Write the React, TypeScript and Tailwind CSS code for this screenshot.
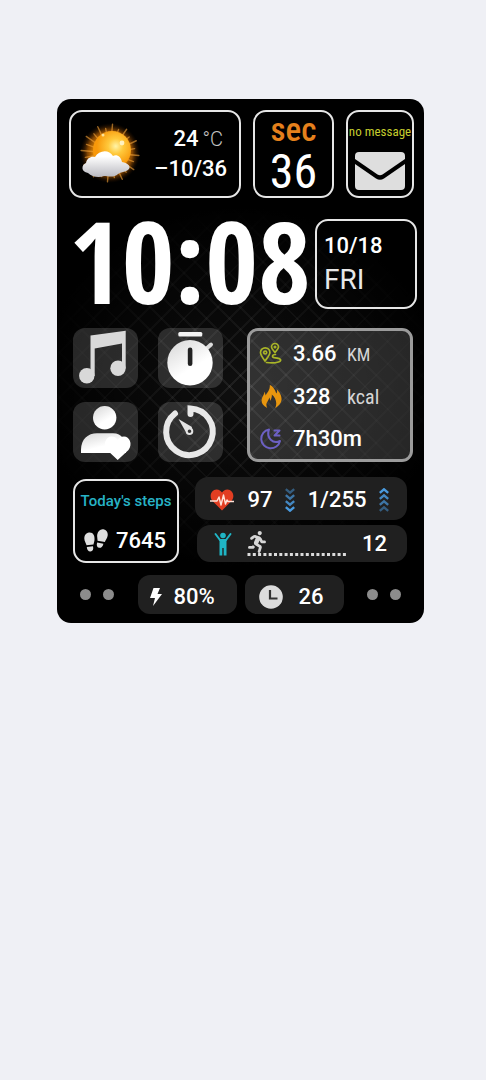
import type { ReactNode } from "react";
import { FaRunning } from "react-icons/fa";
import { ImFire } from "react-icons/im";

const value = "text-[22px] leading-6 font-medium whitespace-nowrap";
const frame = "rounded-[13px] border-2 border-[#e6e6e6]";
const condensed = "font-['Roboto_Condensed','Liberation_Sans',sans-serif]";

function SunCloud() {
  return (
    <svg viewBox="0 0 64 64" className="size-16 shrink-0" aria-hidden="true">
      <defs>
        <radialGradient id="glow">
          <stop offset="0.5" stopColor="#f89808" />
          <stop offset="0.75" stopColor="#c86a04" stopOpacity="0.65" />
          <stop offset="1" stopColor="#3a1800" stopOpacity="0" />
        </radialGradient>
        <radialGradient id="sun" cx="0.6" cy="0.4">
          <stop offset="0" stopColor="#fff4a8" />
          <stop offset="0.4" stopColor="#ffc93c" />
          <stop offset="1" stopColor="#f8980a" />
        </radialGradient>
        <linearGradient id="cloud" x1="0" y1="0" x2="0" y2="1">
          <stop offset="0.2" stopColor="#ffffff" />
          <stop offset="1" stopColor="#b9b9c0" />
        </linearGradient>
      </defs>
      <circle cx="31" cy="31" r="30" fill="url(#glow)" />
      <g stroke="#f7a63a" strokeOpacity="0.6" strokeWidth="1.400" strokeLinecap="round">
        {Array.from({ length: 24 }, (_, i) => (
          <line
            key={i}
            x1="31"
            y1="14"
            x2="31"
            y2={i % 2 ? 6 : 2}
            transform={`rotate(${i * 15 + 5} 31 31)`}
          />
        ))}
      </g>
      <circle cx="33" cy="28" r="19" fill="url(#sun)" />
      <circle cx="43" cy="21" r="2.400" fill="#fffbe0" fillOpacity="0.8" />
      <circle cx="24" cy="13" r="1.500" fill="#fff2b8" fillOpacity="0.8" />
      <path
        d="M9 51c-7-1-7-8-2-10 1-5 5-7 9-6 4-7 14-8 18-1 4-2 8 1 9 6 6 1 10 5 6 8-3 2-7 2-10 4-4 4-10 2-14 2-5 2-12 1-16-3z"
        fill="url(#cloud)"
      />
    </svg>
  );
}

function Envelope() {
  return (
    <svg viewBox="0 0 50 38" className="w-[50px] max-w-full" fill="#dedede" aria-hidden="true">
      <path d="M4 0h42q4 0 4 4v3L27.500 22.500q-2.500 1.600-5 0L0 7V4q0-4 4-4z" />
      <path d="M0 12l21 14.500q4 2.500 8 0L50 12v22q0 4-4 4H4q-4 0-4-4z" />
    </svg>
  );
}

function Shade({ id }: { id: string }) {
  return (
    <defs>
      <linearGradient id={id} x1="0" y1="0" x2="0.600" y2="1">
        <stop offset="0" stopColor="#d6d6d6" />
        <stop offset="0.700" stopColor="#ffffff" />
      </linearGradient>
    </defs>
  );
}

const apps: { name: string; art: ReactNode }[] = [
  {
    name: "Music",
    art: (
      <g fill="#d9d9d9">
        <path d="M17.500 7.500L52.700 2.700V40H49V15.500L21.700 20.500V48H17.500z" />
        <circle cx="13.800" cy="47.800" r="7.700" />
        <circle cx="45" cy="40.300" r="7.700" />
      </g>
    ),
  },
  {
    name: "Stopwatch",
    art: (
      <>
        <Shade id="watch" />
        <rect x="20.300" y="4" width="24" height="4.500" rx="1.500" fill="#f4f4f4" />
        <path d="M48 21l5-4.500" stroke="#ddd" strokeWidth="4" strokeLinecap="round" />
        <circle cx="32" cy="34.700" r="22.700" fill="url(#watch)" />
        <rect x="29.800" y="19.500" width="4.600" height="18.500" rx="2.300" fill="#222" />
      </>
    ),
  },
  {
    name: "Contacts",
    art: (
      <>
        <Shade id="person" />
        <circle cx="31.700" cy="15.700" r="11.700" fill="url(#person)" />
        <path d="M8 51V48C8 37 15 31.300 24 31.300H40C49 31.300 53 38 53 51z" fill="url(#person)" />
        <path
          d="M44.700 58L34 48C29.500 42 33 34.500 38.500 34.500 41.500 34.500 43.500 36 44.700 38 46 36 48 34.500 51 34.500 56.500 34.500 60 42 55.500 48z"
          fill="#fff"
        />
      </>
    ),
  },
  {
    name: "Timer",
    art: (
      <g fill="none" strokeLinecap="round">
        <path d="M32.500 12V6.500A23.300 23.300 0 1 1 17 11.500" stroke="#e8e8e8" strokeWidth="6" />
        <path d="M20.500 17l7 12.500a5 5 0 0 0 6.500-4.500z" fill="#e4e4e4" />
        <circle cx="31.500" cy="29.300" r="2.800" fill="#333" stroke="#e4e4e4" strokeWidth="2" />
      </g>
    ),
  },
];

function Route() {
  return (
    <svg viewBox="0 0 24 24" className="size-6" fill="none" stroke="#a9b527" strokeWidth="1.700" aria-hidden="true">
      <path d="M6 19C3.500 15.500 1.500 13 1.500 10.500a4.700 4.700 0 0 1 9.400 0C10.900 13 8.500 15.500 6 19z" />
      <circle cx="6.200" cy="10.500" r="1.500" />
      <path d="M16 10.500C14 8 12.500 6.500 12.500 5a3.500 3.500 0 0 1 7 0C19.500 6.500 18 8 16 10.500z" />
      <circle cx="16" cy="5" r="0.700" />
      <path d="M16.500 12.500c-4 .5-4 3 0 3.300 6 .7 6.500 3 3 4.200-3 1-9 .9-12 .5" strokeLinecap="round" />
    </svg>
  );
}

function SleepMoon() {
  return (
    <svg viewBox="0 0 24 24" className="size-6" fill="none" stroke="#6c60c4" strokeWidth="2" strokeLinejoin="round" strokeLinecap="round" aria-hidden="true">
      <path d="M10 2.500A9.500 9.500 0 1 0 21 14C14 17.500 7 11 10 2.500z" />
      <path d="M15.500 3.500H20.500L15.500 8.500H20.500" />
    </svg>
  );
}

function HeartPulse() {
  return (
    <svg viewBox="0 0 26 24" className="w-[26px] shrink-0" fill="none" aria-hidden="true">
      <path d="M13 22.500L3.500 13C-.5 8 2.500 1.500 7.500 1.500c2.700 0 4.500 1.500 5.500 3 1-1.500 2.800-3 5.500-3 5 0 8 6.500 4 11.500z" fill="#e23e22" />
      <path d="M1 13H8l2-4 2 8 2.500-10 2 9 1.500-4 1 1.500H25" stroke="#ffe3d8" strokeWidth="1.400" strokeLinejoin="round" />
    </svg>
  );
}

function Chevrons({ up = false }: { up?: boolean }) {
  return (
    <svg viewBox="0 0 10 24" className={up ? "w-[10px] shrink-0 rotate-180" : "w-[10px] shrink-0"} fill="none" stroke="#4a9ade" strokeWidth="2.400" aria-hidden="true">
      {[0.5, 0.7, 0.85, 1].map((opacity, i) => (
        <path key={opacity} d={`M0.800 ${1.2 + i * 6}l4.200 3.500 4.200-3.500`} opacity={opacity} />
      ))}
    </svg>
  );
}

function Standing() {
  return (
    <svg viewBox="0 0 18 24" className="w-[18px] shrink-0" fill="#1fb5c5" aria-hidden="true">
      <circle cx="9" cy="3.500" r="2.800" />
      <path d="M1.500 2L6 8H12L16.500 2" fill="none" stroke="#1fb5c5" strokeWidth="2" strokeLinecap="round" />
      <path d="M5.500 7h7v16.500H9.700V16H8.300v7.500H5.500z" />
    </svg>
  );
}

function Footprints() {
  return (
    <svg viewBox="0 0 24 24" className="size-6 shrink-0" fill="#dedede" aria-hidden="true">
      <path d="M5 3.500c4-.5 6 3 5.500 7.500-.2 2-.8 3-1 4.500L2.500 16.300C2.300 14.500.3 12.500.3 9.500.3 6.500 2 3.800 5 3.500z" />
      <path d="M2.800 18l6.200-.7c.8 3-.3 5-2.500 5.200-2 .2-3.500-1.500-3.700-4.500z" />
      <path d="M19.500.3c3.500.7 4.700 3.700 4.100 6.700-.6 2.800-2 4-2.700 6L13.500 11.800c.3-1.800-.8-3.500-.2-6.500.7-3.200 3.200-5.700 6.200-5z" />
      <path d="M13.200 13.500l6.200 1.200c-.5 3-2.400 4.500-4.400 4.100-2-.4-2.800-2.700-1.800-5.300z" />
    </svg>
  );
}

const stats = [
  { icon: <Route />, amount: "3.66", unit: "KM", size: "text-lg" },
  { icon: <ImFire className="size-[23px] text-[#e8960f]" />, amount: "328", unit: "kcal", size: "text-xl" },
  { icon: <SleepMoon />, amount: "7h30m", unit: "", size: "text-lg" },
];

function Dots() {
  return (
    <span className="flex gap-3 px-1" aria-hidden="true">
      <i className="size-[11px] rounded-full bg-[#8c8c8c]" />
      <i className="size-[11px] rounded-full bg-[#8c8c8c]" />
    </span>
  );
}

export default function App() {
  return (
    <main className="min-h-screen bg-[#eff0f5] pt-[99px] pr-[62px] pb-8 pl-[57px] font-['Roboto','Liberation_Sans',sans-serif] text-white">
      <section className="rounded-[14px] bg-black bg-[radial-gradient(ellipse_200px_180px_at_50%_55%,transparent,#000),repeating-linear-gradient(45deg,#ffffff12_0_2px,transparent_2px_16px),repeating-linear-gradient(-45deg,#ffffff12_0_2px,transparent_2px_16px),linear-gradient(#0f0f0f,#0f0f0f)] pt-[11px] pb-[9px]">
        <div className="flex h-[88px] gap-3 pr-[10px] pl-3">
          <div className={`flex flex-1 items-center justify-between bg-black pr-3 pl-2 ${frame}`}>
            <SunCloud />
            <div className="text-right">
              <p className="flex items-baseline justify-end gap-1 pr-1">
                <span className="text-[22px] leading-[30px] font-medium">24</span>
                <span className="text-xl leading-[30px] font-light text-[#c4c4c4]">°C</span>
              </p>
              <p className="text-[22px] leading-[30px] font-medium whitespace-nowrap">–10/36</p>
            </div>
          </div>
          <div className={`flex w-[81px] flex-col items-center bg-black ${condensed} ${frame}`}>
            <span className="text-[33px] leading-9 font-medium text-[#e5801c]">sec</span>
            <span className="text-5xl leading-[48px]">36</span>
          </div>
          <div className={`flex w-[68px] flex-col items-center gap-2 bg-black pt-2 ${frame}`}>
            <span className={`text-[13px] leading-6 whitespace-nowrap text-[#c5cc2e] ${condensed}`}>no message</span>
            <Envelope />
          </div>
        </div>

        <div className="mt-[15px] flex h-24 items-end justify-between pr-[7px] pl-3">
          <time className="font-['Open_Sans_Condensed','Roboto_Condensed',sans-serif] text-[114px] leading-[98px] font-bold whitespace-nowrap">
            10:08
          </time>
          <div className={`flex h-[90px] w-[102px] flex-col justify-center pl-[7px] ${frame}`}>
            <span className="text-[22px] leading-8 font-medium">10/18</span>
            <span className="text-[28px] leading-9 text-[#e8e8e8]">FRI</span>
          </div>
        </div>

        <div className="mt-[19px] flex justify-between pr-[11px] pl-4">
          <div className="grid grid-cols-2 gap-x-5 gap-y-[14px]">
            {apps.map((app) => (
              <button key={app.name} type="button" aria-label={app.name} className="h-[60px] w-[65px] rounded-xl bg-white/15">
                <svg viewBox="0 0 65 60" className="size-full" aria-hidden="true">
                  {app.art}
                </svg>
              </button>
            ))}
          </div>
          <ul className="flex w-[166px] flex-col justify-between rounded-[11px] border-[3px] border-[#9b9b9b] bg-white/15 pt-[11px] pb-2 pl-[9px]">
            {stats.map((stat) => (
              <li key={stat.amount} className="flex h-6 items-center gap-[10px]">
                <span className="flex w-6 justify-center">{stat.icon}</span>
                <span className="flex items-baseline">
                  <span className={`min-w-[54px] ${value}`}>{stat.amount}</span>
                  <span className={`leading-6 text-[#d6d6d6] ${condensed} ${stat.size}`}>{stat.unit}</span>
                </span>
              </li>
            ))}
          </ul>
        </div>

        <div className="mt-[15px] flex gap-4 pr-[17px] pl-4">
          <div className={`mt-0.5 flex h-[84px] w-[106px] flex-col justify-around bg-black ${frame}`}>
            <span className="text-center text-[15px] leading-6 font-medium whitespace-nowrap text-[#27b3c6]">Today's steps</span>
            <span className="flex items-center gap-2 pl-[9px]">
              <Footprints />
              <span className={value}>7645</span>
            </span>
          </div>
          <div className="flex flex-1 flex-col gap-[5px]">
            <div className="flex h-[43px] items-center justify-between rounded-[13px] bg-[#202020] pt-0.5 pr-[18px] pl-[14px]">
              <HeartPulse />
              <span className={value}>97</span>
              <Chevrons />
              <span className={value}>1/255</span>
              <Chevrons up />
            </div>
            <div className="ml-0.5 flex h-[37px] items-center justify-between rounded-[13px] bg-[#202020] pr-5 pl-[17px]">
              <Standing />
              <span className="flex w-[102px] flex-col">
                <FaRunning className="size-[22px] text-[#d6d6d6]" />
                <svg viewBox="0 0 102 3" className="w-full" aria-hidden="true">
                  <path d="M1.500 1.500H102" stroke="#dcdcdc" strokeWidth="3" strokeDasharray="3 2.300" />
                </svg>
              </span>
              <span className={value}>12</span>
            </div>
          </div>
        </div>

        <div className="mt-3 flex items-center justify-between pr-[19px] pl-[19px]">
          <Dots />
          <div className="flex gap-2">
            <div className="flex h-[39px] w-[99px] items-center gap-3 rounded-xl bg-[#202020] pt-1 pl-[12px]">
              <svg viewBox="0 0 12 18" className="w-3" fill="#fff" aria-hidden="true">
                <path d="M3.500 0H10L7.500 6H12L3 18L5 10H0z" />
              </svg>
              <span className={value}>80%</span>
            </div>
            <div className="flex h-[39px] w-[99px] items-center gap-4 rounded-xl bg-[#202020] pt-1 pl-[14px]">
              <svg viewBox="0 0 24 24" className="size-6" aria-hidden="true">
                <circle cx="12" cy="12" r="11.800" fill="#dcdcdc" />
                <path d="M11 5V13.500H18.500" fill="none" stroke="#333" strokeWidth="2.200" />
              </svg>
              <span className={value}>26</span>
            </div>
          </div>
          <Dots />
        </div>
      </section>
    </main>
  );
}
